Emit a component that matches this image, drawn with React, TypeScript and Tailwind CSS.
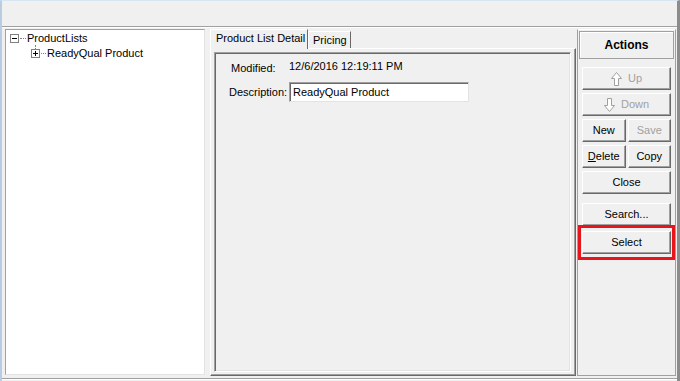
import React from 'react';

const btn =
  'flex items-center justify-center h-[23px] bg-[#f0f0f0] border border-t-white border-l-white border-r-[#696969] border-b-[#696969] shadow-[inset_-1px_-1px_0_#a0a0a0] text-[11px]';

function UpArrow({ down }: { down?: boolean }) {
  return (
    <svg width="11" height="14" viewBox="0 0 11 14" className="mr-[6px]">
      <polygon
        points={down ? '3.5,0.5 7.5,0.5 7.5,7.5 10.5,7.5 5.5,13.5 0.5,7.5 3.5,7.5' : '5.5,0.5 10.5,6.5 7.5,6.5 7.5,13.5 3.5,13.5 3.5,6.5 0.5,6.5'}
        fill="white"
        stroke="#a0a0a0"
        strokeWidth="1"
      />
    </svg>
  );
}

function TreeBox({ plus }: { plus?: boolean }) {
  return (
    <div className="relative w-[9px] h-[9px] border border-[#808080] bg-white flex items-center justify-center">
      <div className="w-[5px] h-px bg-black" />
      {plus && <div className="absolute w-px h-[5px] bg-black" />}
    </div>
  );
}

export default function App() {
  return (
    <div className="w-[680px] h-[381px] overflow-hidden bg-[#f0f0f0] flex flex-col font-['Liberation_Sans',sans-serif] text-[11px] text-black border-l-2 border-l-[#b9cde2] border-r-[3px] border-r-[#8c8c8c] border-t border-t-[#d7e4f1]">
      {/* top bar */}
      <div className="h-[26px] shrink-0 border-b border-b-[#a0a0a0] shadow-[0_1px_0_white]" />

      {/* main */}
      <div className="flex flex-1 pt-[2px] pl-[3px]">
        {/* tree */}
        <div className="w-[200px] h-[346px] bg-white border border-t-[#a0a0a0] border-l-[#a0a0a0] border-r-[#e3e3e3] border-b-[#e3e3e3] pt-px pl-[4px]">
          <div className="flex items-center h-[14px]">
            <TreeBox />
            <div className="w-[6px] border-t border-dotted border-[#808080] mx-[1px]" />
            <span className="leading-none">ProductLists</span>
          </div>
          <div className="flex items-center h-[16px] pl-[21px] relative">
            <div className="absolute left-[25px] top-0 h-[4px] border-l border-dotted border-[#808080]" />
            <TreeBox plus />
            <div className="w-[5px] border-t border-dotted border-[#808080] mx-[1px]" />
            <span className="leading-none">ReadyQual Product</span>
          </div>
        </div>

        {/* tabs */}
        <div className="ml-[5px] w-[366px] h-[347px] flex flex-col">
          <div className="flex items-end h-[19px] shrink-0">
            <div className="h-[20px] w-[98px] border border-b-0 border-t-white border-l-white border-r-[#696969] flex items-center pl-[5px] pb-[2px] bg-[#f0f0f0] relative z-10 -mb-px">
              Product List Detail
            </div>
            <div className="h-[17px] w-[43px] border border-b-0 border-t-white border-l-white border-r-[#696969] flex items-center pl-[4px]">
              Pricing
            </div>
          </div>
          <div className="flex-1 border border-t-white border-l-white border-r-[#696969] border-b-[#696969] shadow-[inset_-1px_-1px_0_#a0a0a0] p-[3px] pr-[4px] pb-[3px]">
            <div className="h-full border border-t-[#a0a0a0] border-l-[#a0a0a0] border-r-white border-b-white shadow-[inset_1px_1px_0_#696969,inset_-1px_-1px_0_#e3e3e3]">
              <div className="flex items-center h-[22px] mt-[3px]">
                <span className="ml-[16px] w-[58px] mt-[3px]">Modified:</span>
                <span className="-mt-px">12/6/2016 12:19:11 PM</span>
              </div>
              <div className="flex items-center h-[20px] mt-[4px]">
                <span className="ml-[14px] w-[60px]">Description:</span>
                <div className="w-[180px] h-[20px] bg-white border border-t-[#a0a0a0] border-l-[#a0a0a0] border-r-[#e3e3e3] border-b-[#e3e3e3] shadow-[inset_1px_1px_0_#696969] flex items-center pl-[3px]">
                  ReadyQual Product
                </div>
              </div>
            </div>
          </div>
        </div>

        {/* actions */}
        <div className="ml-px w-[99px] h-[347px] border border-t-white border-l-[#a0a0a0] border-r-[#a0a0a0] border-b-[#a0a0a0] flex flex-col">
          <div className="h-[28px] mx-px mt-px border border-[#a0a0a0] shadow-[inset_1px_1px_0_white] flex items-center justify-center font-bold text-[12px] pb-px">
            Actions
          </div>
          <div className="flex flex-col gap-[3px] px-[4px] mt-[8px]">
            <div className={`${btn} text-[#a0a0a0]`}>
              <UpArrow />
              Up
            </div>
            <div className={`${btn} text-[#a0a0a0]`}>
              <UpArrow down />
              Down
            </div>
            <div className="flex gap-[2px]">
              <div className={`${btn} flex-1`}>New</div>
              <div className={`${btn} flex-1 text-[#a0a0a0]`}>Save</div>
            </div>
            <div className="flex gap-[2px]">
              <div className={`${btn} flex-1`}>
                <span className="underline">D</span>elete
              </div>
              <div className={`${btn} flex-1`}>Copy</div>
            </div>
            <div className={btn}>Close</div>
            <div className={`${btn} mt-[6px]`}>Search...</div>
            <div className="-mx-[4px] -my-[4px] border-[3px] border-[#e8141c] px-[1px] py-[3px]">
              <div className={btn}>Select</div>
            </div>
          </div>
        </div>
      </div>

      {/* bottom status line */}
      <div className="h-[3px] shrink-0 border-t border-t-[#a0a0a0] shadow-[inset_0_1px_0_white]" />
    </div>
  );
}
